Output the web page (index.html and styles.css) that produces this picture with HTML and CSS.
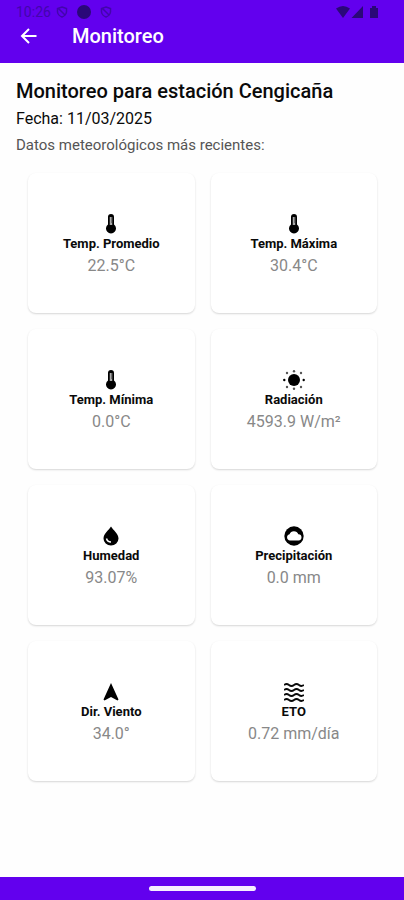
FILE: index.html
```html
<!DOCTYPE html>
<html lang="es">
<head>
<meta charset="utf-8">
<meta name="viewport" content="width=device-width, initial-scale=1">
<title>Monitoreo</title>
<link rel="stylesheet" href="styles.css">
</head>
<body>
<header class="top">
  <div class="status">
    <span class="clock">10:26</span>
    <svg class="status-icon" viewBox="0 0 12 12"><path d="M6 1 10.500 2.500V6Q10 9.500 6 11Q2 9.500 1.500 6V2.500ZM2.500 2.500 9.500 9.500" fill="none" stroke="currentColor" stroke-width="1.500"/></svg>
    <svg class="status-dot" viewBox="0 0 14 14"><circle cx="7" cy="7" r="7" fill="currentColor"/></svg>
    <svg class="status-icon" viewBox="0 0 12 12"><path d="M6 1 10.500 2.500V6Q10 9.500 6 11Q2 9.500 1.500 6V2.500ZM2.500 2.500 9.500 9.500" fill="none" stroke="currentColor" stroke-width="1.500"/></svg>
    <svg class="signals" viewBox="0 0 42 12"><path d="M0 2.500Q7-2.500 14 2.500L7 12ZM27 0V12H15.500ZM34 2H36V0H40V2H42V12H34Z" fill="currentColor"/></svg>
  </div>
  <div class="appbar">
    <button class="back" type="button" aria-label="Volver">
      <svg class="back-icon" viewBox="0 0 16 16"><path d="M16 8H1.500M8.500 1 1.500 8l7 7" fill="none" stroke="currentColor" stroke-width="2"/></svg>
    </button>
    <h1 class="title">Monitoreo</h1>
  </div>
</header>
<main class="content">
  <h2 class="station">Monitoreo para estación Cengicaña</h2>
  <p class="date">Fecha: 11/03/2025</p>
  <p class="note">Datos meteorológicos más recientes:</p>
  <section class="grid">
    <article class="card">
      <svg class="icon" viewBox="0 0 20 20"><path d="M7 3a3 3 0 0 1 6 0v7.500a5 5 0 1 1-6 0Z"/><path d="M10 3v8" stroke="#aaa" stroke-width="2.500"/><path d="M10 4h2M10 6h2M10 8h2" stroke="#333"/></svg>
      <h3 class="label">Temp. Promedio</h3>
      <p class="value">22.5°C</p>
    </article>
    <article class="card">
      <svg class="icon" viewBox="0 0 20 20"><path d="M7 3a3 3 0 0 1 6 0v7.500a5 5 0 1 1-6 0Z"/><path d="M10 3v8" stroke="#aaa" stroke-width="2.500"/><path d="M10 4h2M10 6h2M10 8h2" stroke="#333"/></svg>
      <h3 class="label">Temp. Máxima</h3>
      <p class="value">30.4°C</p>
    </article>
    <article class="card">
      <svg class="icon" viewBox="0 0 20 20"><path d="M7 3a3 3 0 0 1 6 0v7.500a5 5 0 1 1-6 0Z"/><path d="M10 3v8" stroke="#aaa" stroke-width="2.500"/><path d="M10 4h2M10 6h2M10 8h2" stroke="#333"/></svg>
      <h3 class="label">Temp. Mínima</h3>
      <p class="value">0.0°C</p>
    </article>
    <article class="card">
      <svg class="icon icon-sun" viewBox="0 0 22 20"><circle cx="11" cy="10" r="6"/><g><circle cx="1.300" cy="10" r="1.200"/><circle cx="20.700" cy="10" r="1.200"/></g><g fill="#555"><circle cx="11" cy="1.200" r="1.200"/><circle cx="11" cy="18.800" r="1.200"/><circle cx="4" cy="3" r="1.200"/><circle cx="18" cy="3" r="1.200"/><circle cx="4" cy="17" r="1.200"/><circle cx="18" cy="17" r="1.200"/></g></svg>
      <h3 class="label">Radiación</h3>
      <p class="value">4593.9 W/m²</p>
    </article>
    <article class="card">
      <svg class="icon" viewBox="0 0 20 20"><path d="M10 0.500C12 4 17.500 7.500 17.500 12.500a7.500 7 0 0 1-15 0C2.500 7.500 8 4 10 .5Z"/><path d="M5.500 12.500q.8 3.500 4.500 3.500" fill="none" stroke="#fff" stroke-width="1.500"/></svg>
      <h3 class="label">Humedad</h3>
      <p class="value">93.07%</p>
    </article>
    <article class="card">
      <svg class="icon" viewBox="0 0 20 20"><circle cx="10" cy="10" r="9.700"/><path d="M6 14.500a3.200 3.200 0 0 1-.5-6.300A4.700 4.700 0 0 1 14.300 8.300a3.100 3.100 0 0 1 .2 6.200Z" fill="#fff"/></svg>
      <h3 class="label">Precipitación</h3>
      <p class="value">0.0 mm</p>
    </article>
    <article class="card">
      <svg class="icon" viewBox="0 0 20 20"><path d="M10 1 17.500 17.500l-1 1L10 15l-6.500 3.500-1-1Z"/></svg>
      <h3 class="label">Dir. Viento</h3>
      <p class="value">34.0°</p>
    </article>
    <article class="card">
      <svg class="icon" viewBox="0 0 20 20"><path d="M0 3q2.500-2 5 0t5 0 5 0 5 0M0 8q2.500-2 5 0t5 0 5 0 5 0M0 13q2.500-2 5 0t5 0 5 0 5 0M0 18q2.500-2 5 0t5 0 5 0 5 0" fill="none" stroke="currentColor" stroke-width="1.800"/></svg>
      <h3 class="label">ETO</h3>
      <p class="value">0.72 mm/día</p>
    </article>
  </section>
</main>
<footer class="navbar"><span class="handle"></span></footer>
</body>
</html>
```
FILE: styles.css
```css
* {
  box-sizing: border-box;
}

body {
  display: flex;
  flex-direction: column;
  min-height: 100vh;
  margin: 0;
  background: #fefefe;
  color: #0a0a0a;
  font-family: Roboto, "Liberation Sans", sans-serif;
}

h1, h2, h3, p {
  margin: 0;
  font-weight: 400;
}

svg {
  display: block;
}

.top {
  padding-bottom: 15px;
  background: #6200ee;
}

.status {
  display: flex;
  align-items: center;
  height: 24px;
  padding: 0 26px 0 16px;
  color: #2a0879;
}

.clock {
  width: 40px;
  font-size: 14px;
  color: #4305ac;
}

.status-icon {
  width: 12px;
  height: 12px;
  color: #4305ac;
}

.status-dot {
  width: 14px;
  height: 14px;
  margin: 0 9px;
}

.signals {
  width: 42px;
  height: 12px;
  margin-left: auto;
}

.appbar {
  display: flex;
  align-items: center;
  height: 24px;
  padding: 0 20px;
  color: #fff;
}

.back {
  width: 52px;
  padding: 0;
  border: 0;
  background: none;
  color: inherit;
}

.back-icon {
  width: 17px;
  height: 16px;
}

.title {
  font-size: 20px;
  font-weight: 500;
  line-height: 24px;
}

.content {
  flex: 1;
  padding: 16px;
}

.station {
  font-size: 20px;
  font-weight: 500;
  line-height: 24px;
}

.date {
  margin-top: 4px;
  font-size: 16px;
  line-height: 24px;
}

.note {
  margin-top: 4px;
  color: #555;
  font-size: 15px;
  line-height: 20px;
}

.grid {
  display: grid;
  grid-template-columns: 1fr 1fr;
  gap: 16px;
  margin-top: 18px;
  padding: 0 11px 0 12px;
}

.card {
  display: flex;
  flex-direction: column;
  align-items: center;
  justify-content: center;
  height: 140px;
  padding-top: 6px;
  border-radius: 8px;
  background: #fff;
  box-shadow: 0 1px 2px rgba(0, 0, 0, 0.16);
  text-align: center;
}

.icon {
  width: 20px;
  height: 20px;
}

.icon-sun {
  width: 22px;
}

.label {
  font-size: 13px;
  font-weight: 700;
  line-height: 20px;
}

.value {
  color: #888;
  font-size: 16px;
  line-height: 24px;
}

.navbar {
  display: flex;
  justify-content: center;
  height: 23px;
  padding-top: 9px;
  background: #6200ee;
}

.handle {
  width: 107px;
  height: 5px;
  border-radius: 3px;
  background: #f6eeff;
}
```
